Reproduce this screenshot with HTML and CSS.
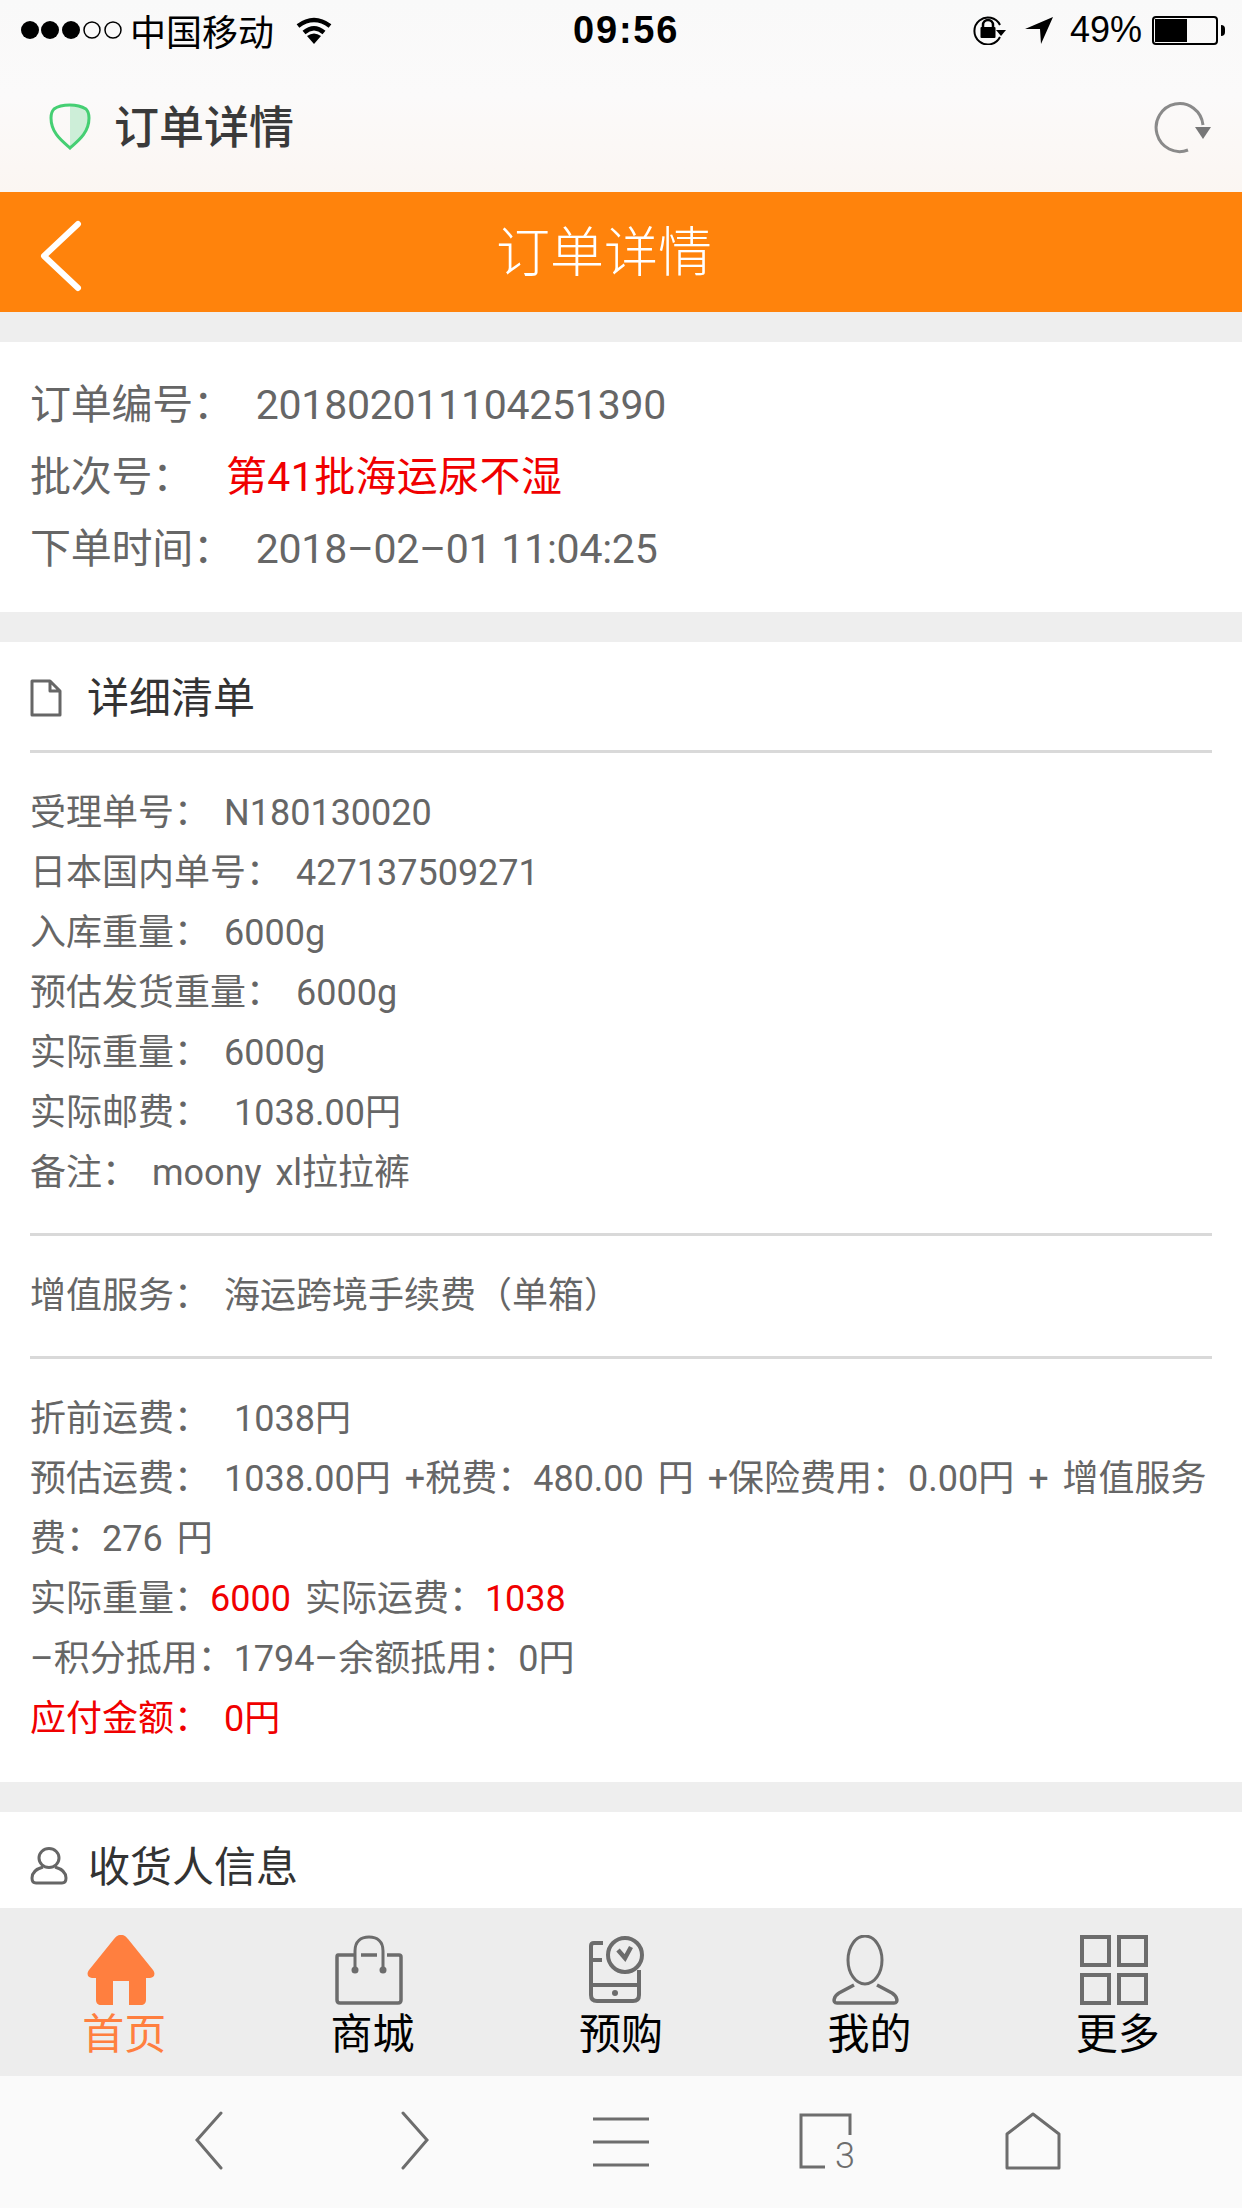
FILE: index.html
```html
<!DOCTYPE html>
<html lang="zh-CN">
<head>
<meta charset="utf-8">
<title>订单详情</title>
<link rel="stylesheet" href="styles.css">
</head>
<body>
<div class="phone">
    <!-- 状态栏 -->
    <div class="chrome-top">
        <div class="status">
            <svg class="signal" width="102" height="20" viewBox="0 0 102 20">
                <circle cx="10" cy="10" r="9"/><circle cx="30" cy="10" r="9"/><circle cx="51" cy="10" r="9"/>
                <circle class="off" cx="72" cy="10" r="8"/><circle class="off" cx="93" cy="10" r="8"/>
            </svg>
            <span class="carrier">中国移动</span>
            <svg class="wifi" width="36" height="27" viewBox="0 0 36 27">
                <path d="M2 9 Q18 -3 34 9" fill="none" stroke="#000" stroke-width="4.5"/>
                <path d="M8 15.5 Q18 7 28 15.5" fill="none" stroke="#000" stroke-width="4.5"/>
                <path d="M11 19 Q18 14 25 19 L18 27 Z"/>
            </svg>
            <span class="time">09:56</span>
            <div class="status-right">
                <svg width="36" height="30" viewBox="0 0 36 30">
                    <path d="M29 22 A13.5 13.5 0 1 1 29 10" fill="none" stroke="#000" stroke-width="2"/>
                    <path d="M25 15 H35 L30 21 Z"/>
                    <path d="M12 12 V10 A5 5 0 0 1 22 10 V12" fill="none" stroke="#000" stroke-width="2.5"/>
                    <rect x="9.5" y="12" width="15" height="11" rx="1"/>
                </svg>
                <svg class="loc" width="28" height="27" viewBox="0 0 28 27">
                    <path d="M0 12 L28 0 L16 27 L15 12 Z"/>
                </svg>
                <span class="pct">49%</span>
                <div class="battery"><i class="battery-fill"></i></div>
                <i class="battery-tip"></i>
            </div>
        </div>
        <!-- 页面标题 -->
        <div class="browser-bar">
            <svg class="shield" width="42" height="48" viewBox="0 0 42 48">
                <path d="M21 2 V45 C29 38 40 30 40 15 C40 10 39 8 37 6 C32 3 26 2 21 2 Z" fill="#cdeed8"/>
                <path d="M21 2 C15 2 9 3 5 6 C3 8 2 10 2 15 C2 30 13 38 21 45 C29 38 40 30 40 15 C40 10 39 8 37 6 C32 3 26 2 21 2 Z" fill="none" stroke="#45cf73" stroke-width="3"/>
            </svg>
            <span class="browser-title">订单详情</span>
            <svg class="reload" width="58" height="54" viewBox="0 0 58 54">
                <path d="M49 25 A23.500 24 0 1 0 34 50" fill="none" stroke="#8a8a8a" stroke-width="3"/>
                <path d="M41 27 H57 L49 39 Z" fill="#777"/>
            </svg>
        </div>
    </div>

    <!-- 橙色导航 -->
    <header class="nav">
        <svg class="nav-back" width="46" height="72" viewBox="0 0 46 72">
            <path d="M40 4 L6 36 L40 68" fill="none" stroke="#fff" stroke-width="6" stroke-linecap="round" stroke-linejoin="round"/>
        </svg>
        <h1>订单详情</h1>
    </header>

    <main class="content">
        <section class="card order-card">
            <p><span class="lab">订单编号：</span>201802011104251390</p>
            <p><span class="lab lab-wide">批次号：</span><span class="red">第41批海运尿不湿</span></p>
            <p><span class="lab">下单时间：</span>2018–02–01 11:04:25</p>
        </section>

        <section class="card list-card">
            <div class="card-head">
                <svg width="32" height="38" viewBox="0 0 32 38">
                    <path d="M2 2 H20 L30 12 V36 H2 Z M20 2 V12 H30" fill="none" stroke="#666" stroke-width="3" stroke-linejoin="round"/>
                </svg>
                <h2>详细清单</h2>
            </div>
            <div class="rows">
                <p><span class="key">受理单号：</span>N180130020</p>
                <p><span class="key">日本国内单号：</span>427137509271</p>
                <p><span class="key">入库重量：</span>6000g</p>
                <p><span class="key">预估发货重量：</span>6000g</p>
                <p><span class="key">实际重量：</span>6000g</p>
                <p><span class="key key-wide">实际邮费：</span>1038.00円</p>
                <p><span class="key">备注：</span>moony xl拉拉裤</p>
            </div>
            <div class="rows">
                <p><span class="key">增值服务：</span>海运跨境手续费（单箱）</p>
            </div>
            <div class="rows rows-last">
                <p><span class="key key-wide">折前运费：</span>1038円</p>
                <p>预估运费： 1038.00円 +税费：480.00 円 +保险费用：0.00円 + 增值服务费：276 円</p>
                <p>实际重量：<span class="red">6000</span> 实际运费：<span class="red">1038</span></p>
                <p>–积分抵用：1794–余额抵用：0円</p>
                <p class="red"><span class="key">应付金额：</span>0円</p>
            </div>
        </section>

        <section class="card person-card">
            <div class="card-head card-head-plain">
                <svg width="38" height="38" viewBox="0 0 38 38">
                    <ellipse cx="19" cy="11" rx="10" ry="9.500" fill="none" stroke="#666" stroke-width="3"/>
                    <path d="M13 20 C6 22 2 26 2 31 C2 34 3 36 6 36 H32 C35 36 36 34 36 31 C36 26 32 22 25 20" fill="none" stroke="#666" stroke-width="3"/>
                </svg>
                <h2>收货人信息</h2>
            </div>
        </section>
    </main>

    <!-- 底部菜单 -->
    <nav class="tabs">
        <div class="tab tab-on">
            <svg width="68" height="70" viewBox="0 0 68 70">
                <path d="M34 0 C30 0 29 2 27 4 L2 35 C-1 39 1 43 5 43 H9 V65 C9 68 11 70 14 70 H26 V46 H42 V70 H54 C57 70 59 68 59 65 V43 H63 C67 43 69 39 66 35 L41 4 C39 2 38 0 34 0 Z" fill="#ff7f3f"/>
            </svg>
            <span>首页</span>
        </div>
        <div class="tab">
            <svg width="68" height="70" viewBox="0 0 68 70">
                <path d="M20 20 H3 Q2 20 2 22 V65 Q2 68 5 68 H63 Q66 68 66 65 V22 Q66 20 64 20 H52 M26 20 H42" fill="none" stroke="#6c6c6c" stroke-width="3.500"/>
                <path d="M20 34 V16 C20 6 26 2 34 2 C42 2 48 6 48 16 V34" fill="none" stroke="#6c6c6c" stroke-width="3"/>
                <circle cx="20" cy="35" r="3.500" fill="#6c6c6c"/><circle cx="48" cy="35" r="3.500" fill="#6c6c6c"/>
            </svg>
            <span>商城</span>
        </div>
        <div class="tab">
            <svg width="68" height="70" viewBox="0 0 68 70">
                <g fill="none" stroke="#6c6c6c" stroke-width="4" transform="translate(3 0)">
                    <path d="M17 8 H8 Q5 8 5 11 V60 Q5 66 11 66 H47 Q53 66 53 60 V35 M5 50 H53 M5 25 H16"/>
                    <circle cx="39" cy="20" r="17"/>
                    <path d="M32 15 L39 23 L45 12" stroke-width="4.500"/>
                </g>
                <circle cx="32" cy="58" r="3" fill="#6c6c6c"/>
            </svg>
            <span>预购</span>
        </div>
        <div class="tab">
            <svg width="68" height="70" viewBox="0 0 68 70">
                <ellipse cx="33" cy="25" rx="17" ry="24" fill="none" stroke="#6c6c6c" stroke-width="3"/>
                <path d="M22 50 L7 58 C2 61 0 68 5 68 H62 C67 68 65 61 60 58 L45 50" fill="none" stroke="#6c6c6c" stroke-width="3.500"/>
            </svg>
            <span>我的</span>
        </div>
        <div class="tab">
            <div class="grid-icon"><i></i><i></i><i></i><i></i></div>
            <span>更多</span>
        </div>
    </nav>

    <!-- 浏览器工具栏 -->
    <div class="toolbar">
        <svg width="30" height="60" viewBox="0 0 30 60"><path d="M27 2 L3 29 L27 57" fill="none" stroke="#6d6d6d" stroke-width="3" stroke-linecap="round"/></svg>
        <svg width="30" height="60" viewBox="0 0 30 60"><path d="M3 2 L27 29 L3 57" fill="none" stroke="#6d6d6d" stroke-width="3" stroke-linecap="round"/></svg>
        <svg width="58" height="60" viewBox="0 0 58 60"><path d="M1 8 H57 M1 31 H57 M1 54 H57" fill="none" stroke="#6d6d6d" stroke-width="3"/></svg>
        <svg width="60" height="60" viewBox="0 0 60 60">
            <path d="M28 56 H4 V4 H53 V24" fill="none" stroke="#6d6d6d" stroke-width="3"/>
            <text class="tab-count" x="38" y="57">3</text>
        </svg>
        <svg width="56" height="60" viewBox="0 0 56 60"><path d="M28 3 L2 23 V57 H54 V23 Z" fill="none" stroke="#6d6d6d" stroke-width="3" stroke-linejoin="round"/></svg>
    </div>
</div>
</body>
</html>
```

FILE: styles.css
```css
* {
    box-sizing: border-box;
}
html, body {
    margin: 0;
    padding: 0;
}
body {
    background: #eee;
    font-family: "Liberation Sans", "Noto Sans CJK SC", sans-serif;
}
p, h1, h2 {
    margin: 0;
    font-weight: 400;
}
.phone {
    width: 1242px;
    height: 2208px;
    display: flex;
    flex-direction: column;
    overflow: hidden;
}
.red {
    color: #f00000;
}

/* 顶部 */
.chrome-top {
    height: 192px;
    background: linear-gradient(#f9f9f9 0, #fbfafa 50%, #fbf6f2 100%);
}
.status {
    height: 60px;
    display: flex;
    align-items: center;
    padding: 0 17px 0 20px;
    color: #000;
}
.signal circle.off {
    fill: none;
    stroke: #000;
    stroke-width: 1.500;
}
.carrier {
    font-size: 36px;
    margin-left: 8px;
}
.wifi {
    margin-left: 22px;
}
.time {
    font-size: 38px;
    font-weight: 700;
    letter-spacing: 1.800px;
    margin-left: 241px;
}
.status-right {
    margin-left: auto;
    display: flex;
    align-items: center;
}
.loc {
    margin-left: 18px;
}
.pct {
    font-size: 36px;
    margin-left: 17px;
}
.battery {
    width: 66px;
    height: 29px;
    margin-left: 10px;
    border: 2px solid #000;
    border-radius: 4px;
    padding: 1px;
}
.battery-fill {
    display: block;
    width: 32px;
    height: 23px;
    background: #000;
}
.battery-tip {
    width: 4px;
    height: 11px;
    margin-left: 3px;
    background: #000;
    border-radius: 0 4px 4px 0;
}
.browser-bar {
    height: 128px;
    display: flex;
    align-items: center;
    padding: 0 30px 0 49px;
}
.browser-bar svg {
    margin-top: 5px;
}
.browser-title {
    font-size: 45px;
    font-weight: 500;
    color: #3a3a3a;
    margin-left: 23px;
}
.reload {
    margin-left: auto;
}

/* 导航 */
.nav {
    height: 120px;
    flex: none;
    position: relative;
    display: flex;
    align-items: center;
    justify-content: center;
    background: #ff830c;
    padding: 0 34px 7px 0;
}
.nav h1 {
    font-size: 54px;
    font-weight: 300;
    color: #fff;
}
.nav-back {
    position: absolute;
    left: 38px;
    top: 28px;
}

/* 内容 */
.content {
    flex: 1;
    overflow: hidden;
    padding-top: 30px;
    font-family: Roboto, "Noto Sans CJK SC", sans-serif;
    font-weight: 300;
}
.card {
    background: #fff;
    margin-bottom: 30px;
    padding: 0 30px;
}
.order-card {
    height: 270px;
    padding-top: 27px;
    font-size: 41px;
    line-height: 72px;
    letter-spacing: -0.25px;
    color: #666;
}
.order-card .red {
    letter-spacing: 0.350px;
}
.lab {
    margin-right: 22px;
}
.lab-wide {
    margin-right: 33px;
}
.list-card {
    height: 1140px;
}
.card-head {
    height: 111px;
    display: flex;
    align-items: center;
    gap: 25px;
    padding-bottom: 3px;
    border-bottom: 3px solid #d9d9d9;
}
.card-head svg {
    flex: none;
    margin-top: 6px;
}
.card-head h2 {
    font-size: 42px;
    font-weight: 400;
    color: #333;
}
.card-head-plain {
    height: 96px;
    border-bottom: 0;
    gap: 20px;
    padding: 6px 0 0;
}
.rows {
    padding: 30px 0;
    font-size: 36px;
    line-height: 60px;
    word-spacing: 5px;
    color: #666;
    border-bottom: 3px solid #d9d9d9;
}
.rows-last {
    border-bottom: 0;
}
.rows .red {
    color: #f00000;
}
.key {
    margin-right: 14px;
}
.key-wide {
    margin-right: 24px;
}
.person-card {
    height: 96px;
    margin-bottom: 0;
}

/* 底部菜单 */
.tabs {
    height: 168px;
    flex: none;
    display: grid;
    grid-template-columns: repeat(5, 1fr);
    background: #ededed;
    padding-top: 27px;
}
.tab {
    display: flex;
    flex-direction: column;
    align-items: center;
    font-size: 42px;
    line-height: 60px;
    color: #000;
}
.tab svg, .grid-icon {
    flex: none;
    height: 70px;
    margin-right: 7px;
}
.tab-on {
    color: #ff7f3f;
}
.grid-icon {
    width: 68px;
    display: grid;
    grid-template-columns: 1fr 1fr;
    gap: 6px;
}
.grid-icon i {
    border: 4px solid #6c6c6c;
}
.toolbar {
    height: 132px;
    flex: none;
    display: grid;
    grid-template-columns: repeat(5, 206px);
    justify-content: center;
    justify-items: center;
    align-items: center;
    background: #fafafa;
    padding-bottom: 2px;
}
.tab-count {
    font-size: 36px;
    font-family: Roboto, sans-serif;
    font-weight: 300;
    fill: #6d6d6d;
}
```
